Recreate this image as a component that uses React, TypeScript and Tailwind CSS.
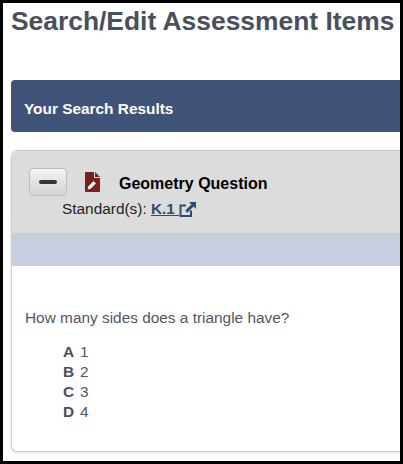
import React from 'react';
import { Minus } from 'lucide-react';

const answers = [
  { letter: 'A', text: '1' },
  { letter: 'B', text: '2' },
  { letter: 'C', text: '3' },
  { letter: 'D', text: '4' },
];

const App: React.FC = () => {
  return (
    <div className="h-[464px] w-[403px] overflow-hidden border-[3px] border-black bg-white font-['Liberation_Sans',Arial,sans-serif]">
      <div className="w-[420px] pl-2">
        {/* Page title */}
        <h1 className="mt-[2px] h-[75px] whitespace-nowrap text-[26.4px] font-bold leading-[32px] text-[#4a4f5e]">
          Search/Edit Assessment Items
        </h1>

        {/* Results banner */}
        <div className="flex h-[52px] items-center rounded-l-[4px] bg-[#3f5378] pl-[13px] pt-[6px] text-[15.4px] font-bold text-white">
          Your Search Results
        </div>

        {/* Question card */}
        <div className="mt-[18px] h-[302px] rounded-l-[6px] border border-r-0 border-[#cccccc] shadow-[0_1px_3px_rgba(0,0,0,0.12)]">
          <div className="h-[82px] rounded-tl-[6px] bg-[#dcdcdc] pl-[17px] pt-[17px]">
            <div className="flex items-center">
              <button className="flex h-[28px] w-[38px] items-center justify-center rounded-[4px] border border-[#bdbdbd] bg-gradient-to-b from-[#f4f4f4] to-[#d4d4d4]">
                <Minus size={24} strokeWidth={4} className="text-[#333333]" />
              </button>
              <svg viewBox="0 0 15 20" className="ml-[18px] h-[20px] w-[15px]">
                <path d="M0 1a1 1 0 0 1 1-1h8v6h6v13a1 1 0 0 1-1 1H1a1 1 0 0 1-1-1z" fill="#7b1f1f" />
                <path d="M10 0l5 5h-5z" fill="#7b1f1f" />
                <path d="M2.6 17.4l.7-3 5.3-5.3 2.3 2.3-5.3 5.3z" fill="#ffffff" />
              </svg>
              <span className="ml-[19px] pt-[4px] text-[16px] font-bold text-black">Geometry Question</span>
            </div>
            <div className="ml-[33px] mt-[3px] text-[15.4px] leading-[20px] text-[#222222]">
              Standard(s):{' '}
              <a className="inline-flex items-center font-bold text-[#2f4a7a]">
                <span className="underline">K.1&nbsp;</span>
                <svg viewBox="0 0 17 15" className="h-[15px] w-[17px]">
                  <path d="M12 8.5V14H1.5V3.5H7" fill="none" stroke="#2f4a7a" strokeWidth="2" />
                  <path d="M10 0h7v7l-2.4-2.4-6.2 6.2-2.2-2.2 6.2-6.2z" fill="#2f4a7a" />
                </svg>
              </a>
            </div>
          </div>

          <div className="h-[33px] bg-[#c7cedd]" />

          <div className="px-[13px] pt-[42px] text-[15.4px] leading-[20px] text-[#55565f]">
            <p>How many sides does a triangle have?</p>
            <ul className="ml-[38px] mt-[14px]">
              {answers.map((a) => (
                <li key={a.letter} className="flex">
                  <b className="w-[17px] text-[#4a4f5e]">{a.letter}</b>
                  <span>{a.text}</span>
                </li>
              ))}
            </ul>
          </div>
        </div>
      </div>
    </div>
  );
};

export default App;
